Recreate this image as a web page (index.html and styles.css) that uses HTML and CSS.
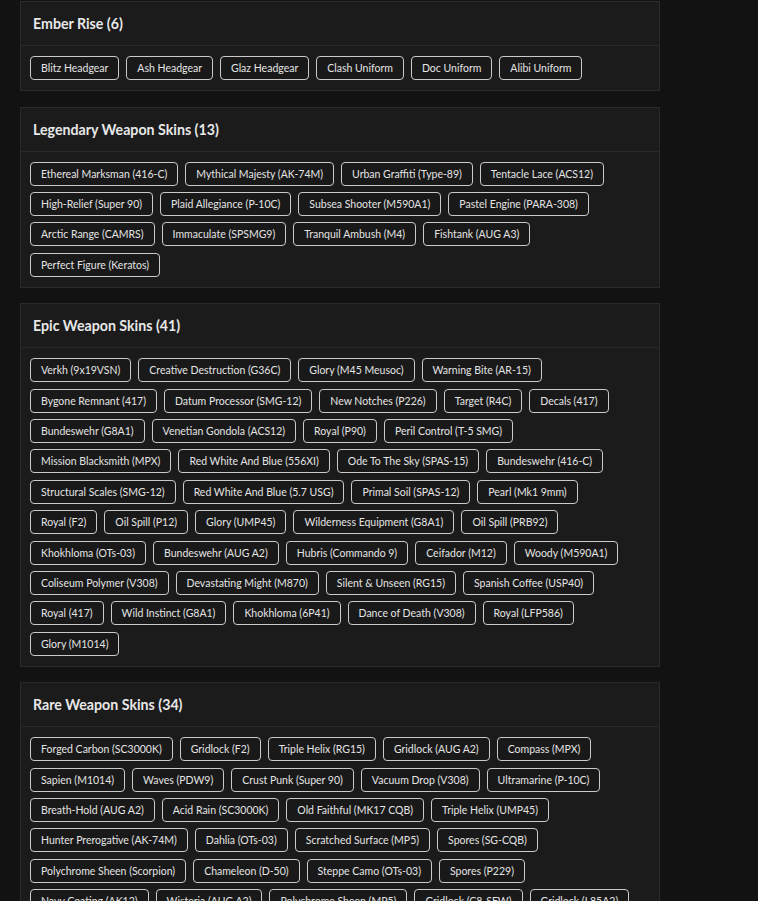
FILE: index.html
```html
<!DOCTYPE html>
<html lang="en">
<head>
    <meta charset="UTF-8">
    <meta name="viewport" content="width=device-width, initial-scale=1.0">
    <title>Unlocked Items</title>
    <link rel="stylesheet" href="styles.css">
</head>
<body>
    <div class="container">
        <div class="card">
            <div class="card-header"><h2>Ember Rise (6)</h2></div>
            <div class="card-body">
                <span class="tag">Blitz Headgear</span>
                <span class="tag">Ash Headgear</span>
                <span class="tag">Glaz Headgear</span>
                <span class="tag">Clash Uniform</span>
                <span class="tag">Doc Uniform</span>
                <span class="tag">Alibi Uniform</span>
            </div>
        </div>

        <div class="card">
            <div class="card-header"><h2>Legendary Weapon Skins (13)</h2></div>
            <div class="card-body">
                <span class="tag">Ethereal Marksman (416-C)</span>
                <span class="tag">Mythical Majesty (AK-74M)</span>
                <span class="tag">Urban Graffiti (Type-89)</span>
                <span class="tag">Tentacle Lace (ACS12)</span>
                <span class="tag">High-Relief (Super 90)</span>
                <span class="tag">Plaid Allegiance (P-10C)</span>
                <span class="tag">Subsea Shooter (M590A1)</span>
                <span class="tag">Pastel Engine (PARA-308)</span>
                <span class="tag">Arctic Range (CAMRS)</span>
                <span class="tag">Immaculate (SPSMG9)</span>
                <span class="tag">Tranquil Ambush (M4)</span>
                <span class="tag">Fishtank (AUG A3)</span>
                <span class="tag">Perfect Figure (Keratos)</span>
            </div>
        </div>

        <div class="card">
            <div class="card-header"><h2>Epic Weapon Skins (41)</h2></div>
            <div class="card-body">
                <span class="tag">Verkh (9x19VSN)</span>
                <span class="tag">Creative Destruction (G36C)</span>
                <span class="tag">Glory (M45 Meusoc)</span>
                <span class="tag">Warning Bite (AR-15)</span>
                <span class="tag">Bygone Remnant (417)</span>
                <span class="tag">Datum Processor (SMG-12)</span>
                <span class="tag">New Notches (P226)</span>
                <span class="tag">Target (R4C)</span>
                <span class="tag">Decals (417)</span>
                <span class="tag">Bundeswehr (G8A1)</span>
                <span class="tag">Venetian Gondola (ACS12)</span>
                <span class="tag">Royal (P90)</span>
                <span class="tag">Peril Control (T-5 SMG)</span>
                <span class="tag">Mission Blacksmith (MPX)</span>
                <span class="tag">Red White And Blue (556XI)</span>
                <span class="tag">Ode To The Sky (SPAS-15)</span>
                <span class="tag">Bundeswehr (416-C)</span>
                <span class="tag">Structural Scales (SMG-12)</span>
                <span class="tag">Red White And Blue (5.7 USG)</span>
                <span class="tag">Primal Soil (SPAS-12)</span>
                <span class="tag">Pearl (Mk1 9mm)</span>
                <span class="tag">Royal (F2)</span>
                <span class="tag">Oil Spill (P12)</span>
                <span class="tag">Glory (UMP45)</span>
                <span class="tag">Wilderness Equipment (G8A1)</span>
                <span class="tag">Oil Spill (PRB92)</span>
                <span class="tag">Khokhloma (OTs-03)</span>
                <span class="tag">Bundeswehr (AUG A2)</span>
                <span class="tag">Hubris (Commando 9)</span>
                <span class="tag">Ceifador (M12)</span>
                <span class="tag">Woody (M590A1)</span>
                <span class="tag">Coliseum Polymer (V308)</span>
                <span class="tag">Devastating Might (M870)</span>
                <span class="tag">Silent &amp; Unseen (RG15)</span>
                <span class="tag">Spanish Coffee (USP40)</span>
                <span class="tag">Royal (417)</span>
                <span class="tag">Wild Instinct (G8A1)</span>
                <span class="tag">Khokhloma (6P41)</span>
                <span class="tag">Dance of Death (V308)</span>
                <span class="tag">Royal (LFP586)</span>
                <span class="tag">Glory (M1014)</span>
            </div>
        </div>

        <div class="card">
            <div class="card-header"><h2>Rare Weapon Skins (34)</h2></div>
            <div class="card-body">
                <span class="tag">Forged Carbon (SC3000K)</span>
                <span class="tag">Gridlock (F2)</span>
                <span class="tag">Triple Helix (RG15)</span>
                <span class="tag">Gridlock (AUG A2)</span>
                <span class="tag">Compass (MPX)</span>
                <span class="tag">Sapien (M1014)</span>
                <span class="tag">Waves (PDW9)</span>
                <span class="tag">Crust Punk (Super 90)</span>
                <span class="tag">Vacuum Drop (V308)</span>
                <span class="tag">Ultramarine (P-10C)</span>
                <span class="tag">Breath-Hold (AUG A2)</span>
                <span class="tag">Acid Rain (SC3000K)</span>
                <span class="tag">Old Faithful (MK17 CQB)</span>
                <span class="tag">Triple Helix (UMP45)</span>
                <span class="tag">Hunter Prerogative (AK-74M)</span>
                <span class="tag">Dahlia (OTs-03)</span>
                <span class="tag">Scratched Surface (MP5)</span>
                <span class="tag">Spores (SG-CQB)</span>
                <span class="tag">Polychrome Sheen (Scorpion)</span>
                <span class="tag">Chameleon (D-50)</span>
                <span class="tag">Steppe Camo (OTs-03)</span>
                <span class="tag">Spores (P229)</span>
                <span class="tag">Navy Coating (AK12)</span>
                <span class="tag">Wisteria (AUG A2)</span>
                <span class="tag">Polychrome Sheen (MP5)</span>
                <span class="tag">Gridlock (C8-SFW)</span>
                <span class="tag">Gridlock (L85A2)</span>
                <span class="tag">Gridlock (Alda 5.56)</span>
                <span class="tag">Spores (P10 Roni)</span>
                <span class="tag">Navy Coating (T-95 LSW)</span>
                <span class="tag">Wisteria (SPAS-12)</span>
                <span class="tag">Chameleon (C75 Auto)</span>
                <span class="tag">Dahlia (MP7)</span>
                <span class="tag">Steppe Camo (416-C)</span>
            </div>
        </div>
    </div>
</body>
</html>
```

FILE: styles.css
```css
body {
    margin: 0;
    padding: 0;
    background: #121212;
    color: #e6e6e6;
    font-family: 'Lato', 'Liberation Sans', Arial, sans-serif;
}

.container {
    width: 640px;
    padding: 1px 0 20px 20px;
}

.card {
    background: #1b1b1b;
    border: 1px solid #2a2a2a;
    margin-bottom: 15.5px;
}

.card-header {
    height: 43px;
    display: flex;
    align-items: center;
    padding: 0 12px;
    border-bottom: 1px solid #2a2a2a;
}

.card-header h2 {
    margin: 0;
    font-size: 14.2px;
    font-weight: 700;
    color: #e8e8e8;
}

.card-body {
    display: flex;
    flex-wrap: wrap;
    gap: 6.4px 7px;
    padding: 10px 9px;
}

.tag {
    display: inline-block;
    padding: 5px 10px;
    line-height: 12px;
    font-size: 10.5px;
    color: #e4e4e4;
    background: #191919;
    border: 1px solid #cacaca;
    border-radius: 4px;
    white-space: nowrap;
}
```
